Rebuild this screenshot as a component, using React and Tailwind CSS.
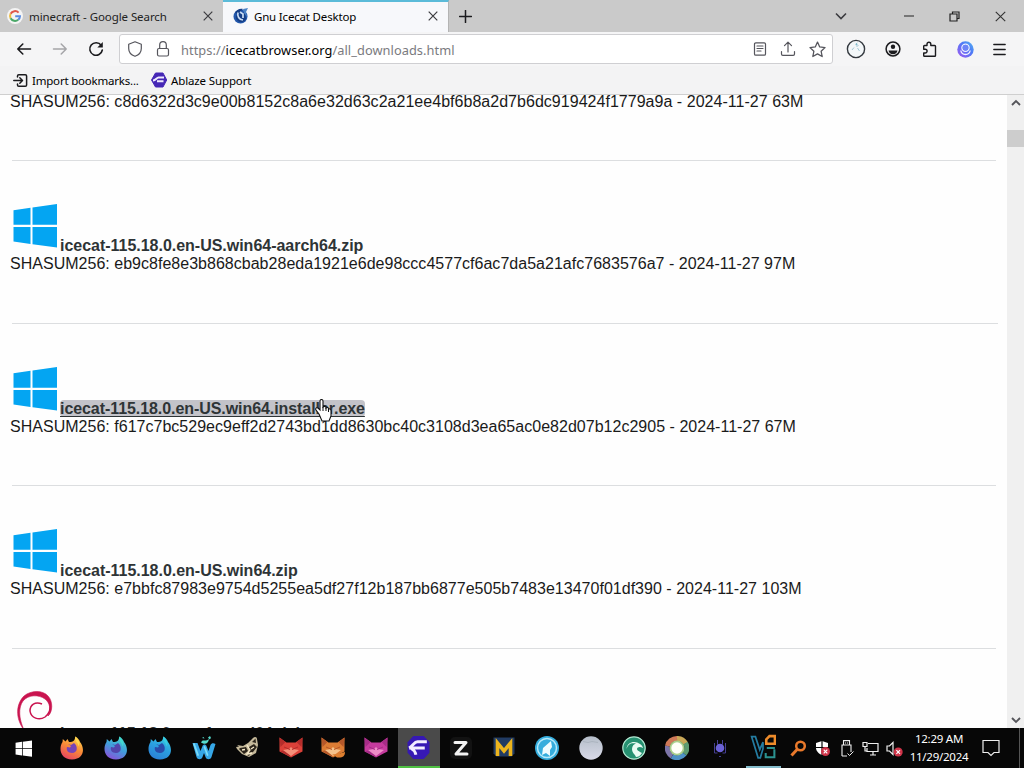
import React from "react";

const Svg = ({ size = 24, box = 24, className = "", children }) => (
  <svg width={size} height={size} viewBox={`0 0 ${box} ${box}`} fill="none" className={`shrink-0 ${className}`}>
    {children}
  </svg>
);

/* ---------- browser chrome icons ---------- */
const line = { stroke: "#1b1b1e", strokeWidth: 1.5, strokeLinecap: "round", strokeLinejoin: "round" };
const thin = { stroke: "#55555c", strokeWidth: 1.2, strokeLinecap: "round", strokeLinejoin: "round" };

const Google = () => (
  <Svg size={16} box={16}>
    <circle cx="8" cy="8" r="8" fill="#f4f4f4" />
    <path d="M11.6 4.6A5 5 0 0 0 3.6 5.8" stroke="#e0584a" strokeWidth="2" />
    <path d="M3.6 5.8a5 5 0 0 0 0 4.5" stroke="#edbd42" strokeWidth="2" />
    <path d="M3.6 10.3a5 5 0 0 0 7.6 1.5" stroke="#4ba868" strokeWidth="2" />
    <path d="M11.2 11.8A5 5 0 0 0 13 8.2H8.2" stroke="#5a8be0" strokeWidth="2" />
  </Svg>
);
const IceCat = () => (
  <Svg size={16} box={16}>
    <circle cx="7.500" cy="8.500" r="7" fill="#2257ab" />
    <path d="M2 5c1-3 5-5 8-4L7 4l5 1 1 6c-2 4-7 4-9 1C2 10 3 7 5 6z" fill="#153e86" />
    <path d="M5 4.500c-1 4 1 7 5 7.500M7 4l3 2v4" stroke="#c8dcf4" strokeWidth="1.700" />
    <path d="M10 1l5-1-2 4 1 5-3-4z" fill="#4c83c6" />
  </Svg>
);
const Close = ({ size = 10, color = "#3c3c40", width = 1.2 }) => (
  <Svg size={size} box={10}><path d="M.7.7l8.6 8.6M9.3.7L.7 9.3" stroke={color} strokeWidth={width} /></Svg>
);
const Plus = () => <Svg size={13} box={13}><path d="M6.5.5v12M.5 6.5h12" {...line} /></Svg>;
const Back = () => <Svg size={16} box={16}><path d="M14.500 8H1.800M6.800 3L1.800 8l5 5" {...line} strokeWidth="1.600" /></Svg>;
const Forward = () => <Svg size={16} box={16}><path d="M1.500 8h12.700M9.200 3l5 5-5 5" {...line} stroke="#a5a5a8" /></Svg>;
const Reload = () => (
  <Svg size={16} box={16}>
    <path d="M13.200 4.300A6.300 6.300 0 1 0 14.300 9" {...line} strokeWidth="1.600" />
    <path d="M14.800 1v5.500H9.300z" fill="#1b1b1e" />
  </Svg>
);
const Shield = () => (
  <Svg size={16} box={16}><path d="M8 .8l6.300 2.400v4.300c0 3.600-2.600 6.500-6.300 7.800C4.300 14 1.700 11.100 1.700 7.500V3.200z" {...thin} /></Svg>
);
const Lock = () => (
  <Svg size={16} box={16}>
    <rect x="2.500" y="7.500" width="11" height="7.500" rx="1.500" {...thin} />
    <path d="M4.700 7.500V4a3.300 3.300 0 0 1 6.600 0v3.500" {...thin} />
  </Svg>
);
const Reader = () => (
  <Svg size={14} box={14}><rect x="1.500" y=".8" width="11" height="12.400" rx="1.300" {...thin} /><path d="M4 4h6M4 6.500h6M4 9h4" {...thin} /></Svg>
);
const Share = () => (
  <Svg size={16} box={16}><path d="M8 11V1.500M4.500 4.700L8 1.200l3.500 3.500M1.500 10.500V13c0 .8.500 1.300 1.300 1.300h10.400c.8 0 1.300-.5 1.300-1.300v-2.500" {...thin} /></Svg>
);
const Star = () => (
  <Svg size={17} box={16}><path d="M8 1l2.100 4.600 5 .6-3.700 3.400 1 5L8 12.100l-4.400 2.500 1-5L.9 6.200l5-.6z" {...thin} /></Svg>
);
const Gauge = () => (
  <Svg size={20} box={20}>
    <circle cx="10" cy="10" r="8.600" fill="#f3f7f9" stroke="#33383e" strokeWidth="1.400" />
    <path d="M10 5l1.300-1.200M10.500 7.500l2-1M8 8.500L6 11M11.500 9l2 3" stroke="#8fbccd" strokeWidth=".8" />
    <circle cx="10.500" cy="5.500" r="1" fill="#7db9cb" />
  </Svg>
);
const Account = () => (
  <Svg size={16} box={16}>
    <circle cx="8" cy="8" r="6.900" {...line} />
    <circle cx="8" cy="5.800" r="2.200" fill="#1b1b1e" />
    <path d="M3.500 9.500h9c-.3 2.400-2 3.700-4.500 3.700S3.800 11.900 3.500 9.500z" fill="#1b1b1e" />
  </Svg>
);
const Puzzle = () => (
  <Svg size={17} box={17}>
    <path d="M6 4.500V3.200a1.900 1.900 0 0 1 3.800 0v1.300h3.900c.5 0 .8.300.8.800v9.200c0 .5-.3.800-.8.800H3.500c-.5 0-.8-.3-.8-.8v-2.500h1.500a1.900 1.900 0 0 0 0-3.800H2.700V5.300c0-.5.300-.8.800-.8z" {...line} strokeWidth="1.400" />
  </Svg>
);
const Avatar = () => (
  <Svg size={17} box={17}>
    <defs><linearGradient id="avatar" x1="0" y1="1" x2="1" y2="0"><stop stopColor="#a25af0" /><stop offset=".6" stopColor="#4d79f6" /><stop offset="1" stopColor="#55b8f2" /></linearGradient></defs>
    <circle cx="8.500" cy="8.500" r="8.200" fill="url(#avatar)" />
    <circle cx="8.500" cy="6.800" r="3.600" stroke="#f0f2ff" strokeWidth="1.300" />
    <path d="M3.800 9.500c1 5.300 8.400 5.300 9.400 0" stroke="#f4f4ff" strokeWidth="1.300" />
    <circle cx="8.500" cy="6.600" r="2.800" fill="#6d84f7" />
  </Svg>
);
const Menu = () => <Svg size={13} box={13}><path d="M.8 1.500h11.400M.8 6.500h11.400M.8 11.500h11.400" {...line} strokeWidth="1.300" /></Svg>;
const Import = () => (
  <Svg size={15} box={15}>
    <path d="M4.500 4V3c0-.8.500-1.300 1.300-1.300h6.500c.8 0 1.300.5 1.300 1.300v9c0 .8-.5 1.300-1.300 1.300H5.800c-.8 0-1.300-.5-1.300-1.300v-1" {...line} />
    <path d="M.8 7.500h8.500M6.800 4.800l2.700 2.700-2.700 2.700" {...line} />
  </Svg>
);
const Ablaze = () => (
  <Svg size={16} box={16}>
    <path d="M4.500 1h7.500l3.700 7-3.700 7H4.500L.5 8z" fill="#4527b5" stroke="#4527b5" strokeLinejoin="round" />
    <path d="M13 5.500H7.500C5.500 5.500 5 8.500 2 8.500M12.500 9.300H6" stroke="#efeaff" strokeWidth="1.900" />
  </Svg>
);
const Chevron = ({ className = "" }) => (
  <Svg size={12} box={12} className={className}><path d="M1 3.500l5 5 5-5" stroke="#3c3c40" strokeWidth="1.600" /></Svg>
);
const ScrollArrow = ({ className = "" }) => (
  <Svg size={10} box={10} className={className}><path d="M1 3l4 4 4-4" stroke="#55555a" strokeWidth="1.900" /></Svg>
);

/* ---------- page artwork ---------- */
const WinLogo = ({ size = 45, color = "#04a5f2" }) => (
  <Svg size={size} box={45}>
    <path d="M1.500 7.300l17-2.500v17h-17zM20.500 4.400L45 1v20.800H20.500zM1.500 24h17v17l-17-2.500zM20.500 24H45v20.600l-24.500-3.300z" fill={color} />
  </Svg>
);
const Debian = () => (
  <Svg size={45} box={45}>
    <path d="M28 15c-7-3-12 1-12 7 1 7 9 10 15 6 4-3 6-8 5-14" stroke="#c9144f" strokeWidth="1.500" />
    <path d="M10 41C1 29 2 15 10 7c7-6 19-6 24 0 5 5 5 16 0 20 3-7 2-13-3-17-7-5-17-4-22 2-5 7-4 18 1 29z" fill="#c9144f" stroke="#c9144f" strokeWidth=".6" />
  </Svg>
);

/* ---------- taskbar icons ---------- */
const Fox = ({ id, a, b, c, core }) => (
  <Svg>
    <defs><linearGradient id={id} x1=".8" y1="0" x2=".3" y2="1"><stop stopColor={a} /><stop offset=".5" stopColor={b} /><stop offset="1" stopColor={c} /></linearGradient></defs>
    <path d="M15.500.5c3 2 4 4 4.500 5.500 5 6 4.500 17.500-8 17.500C4 23.500.5 18 .5 13c0-3 .7-5 2-7l.3-3 2.700 2.600L7.500 3 9 6c2 0 4-.5 5-1.500.8-1 1-2.500 1.500-4z" fill={`url(#${id})`} />
    <path d="M8 8l3 1 3-2c4 3 4 10-2 10-4 0-6-3-5-6l3 .5 1-1.500z" fill={core} />
    <path d="M15.500.5c-2 4 3 6 3 10 1-2 1-3 .5-5-1-2-2-3-3.500-5z" fill={a} />
  </Svg>
);
const Waterfox = () => (
  <Svg>
    <path d="M.5 7h5l3 8 2-5c1-2 3-2 4 0l2 5 2-6c1-2 3-2 5-1l-4 13c-1 3-5 3-6 0l-1.500-4-1.500 4c-1 3-5 3-6 0z" fill="#36a7e7" />
    <path d="M2 8l4 11M12.500 11l3 8" stroke="#7bdcf7" strokeWidth="1.800" strokeLinecap="round" />
    <path d="M9 6.500c2-4 4 0 8-3.500-.5 4-3 5.500-6 4.500zM16 1.500l2-1.500 1 2-1.500 1.500zM10 2l1.500-1 1 1.500z" fill="#55dccd" />
  </Svg>
);
const Raccoon = () => (
  <Svg>
    <path d="M1 9l6 1 5-3 5-5c2-2 4-1 4 1l1 6-2 8-7 4-7-3-5-5-1-2 3-.5z" fill="#c5b99a" />
    <path d="M4 12l6-1 2 4-4 3-5-5zM13 11l5-3 3 3-4 5-4 1zM16 6l3.500-3.500L20 7zM11 19l3-1-1 2z" fill="#2b241a" />
    <path d="M6 14l3-.5M15 13l3-2M11 9l3 5-3 4 5-1" stroke="#f7ebca" strokeWidth="1.300" />
  </Svg>
);
const FoxHead = ({ main, dark, light, tail }) => (
  <Svg>
    <path d="M.5 1.500l7 5h9l7-5v14l-4 2-7.500 4-7.500-4-4-2z" fill={main} />
    <path d="M.5 1.500l6 4.500-5 5zM23.500 1.500l-6 4.500 5 5zM1 15l6-1 5 7-8-4z" fill={dark} />
    <path d="M4 14l6-1 2-2 2 2 6 1-4 3-4 3-4-3z" fill={light} />
    <path d="M5 11l6 2.500M19 11l-6 2.500" stroke={dark} strokeWidth="1" />
    {tail && <path d="M11 18c5 1 8-1 13-2 0 4-2 6-8 5.500z" fill={tail} />}
  </Svg>
);
const FloorpApp = () => (
  <Svg size={25}>
    <path d="M7 1h10l5.500 6v10L17 23H7L1.500 17V7z" fill="#3618b4" />
    <path d="M20 6.500H11C8 6.500 7 10 3 12.500M3 12.500h15M5 13c2 1 4 3 4.500 6" stroke="#f2edff" strokeWidth="2.800" />
  </Svg>
);
const Zen = () => (
  <Svg>
    <rect x="1" y="1" width="22" height="22" rx="5" fill="#121212" />
    <path d="M6 6.500h11L7 18h11" stroke="#f4f4f4" strokeWidth="3" strokeLinejoin="round" strokeLinecap="round" />
  </Svg>
);
const Mull = () => (
  <Svg>
    <path d="M1.500 1.500h21v16l-3 3h-15l-3-3z" fill="#213b63" />
    <path d="M5.500 20V7l6.500 8 6.500-8v13" stroke="#edb51d" strokeWidth="3.600" />
  </Svg>
);
const Wolf = () => (
  <Svg>
    <circle cx="12" cy="12" r="12" fill="#35addd" /><circle cx="12" cy="12" r="9.500" stroke="#b5e9fa" strokeWidth="1.500" />
    <path d="M7 19l1-7 8-7 1 6-2 3v6l-4-3z" fill="#eefcff" />
  </Svg>
);
const Orb = () => (
  <Svg>
    <defs><linearGradient id="orb" x1="0" y1="0" x2="0" y2="1"><stop stopColor="#b5bec9" /><stop offset="1" stopColor="#d9dae8" /></linearGradient></defs>
    <circle cx="12" cy="12" r="11.700" fill="url(#orb)" /><path d="M4 5.500l5 1 4-1 6 1" stroke="#a3adb8" strokeWidth=".7" />
  </Svg>
);
const Wave = () => (
  <Svg>
    <circle cx="12" cy="12" r="11.200" fill="#269171" stroke="#b4e8d2" strokeWidth="1.200" />
    <path d="M4.500 13C5 6 13 4 18 8c2 1.500 3 3 3 4-3-2-6-1-6 1 0 1.500 2 2 3 3l2 1c-2 3-4 4-6 4-1-3-4-4-4-8 0-3 2-5 4-5.500C9 6.500 6 8 4.500 13z" fill="#e9fbf3" />
  </Svg>
);
const Rainbow = () => (
  <Svg>
    <path d="M12 2.500a9.500 9.500 0 0 1 8.700 5" stroke="#c9a858" strokeWidth="5" /><path d="M20.500 7a9.700 9.700 0 0 1-1 11" stroke="#5c9b72" strokeWidth="5" />
    <path d="M19.500 18A9.700 9.700 0 0 1 7 20.300" stroke="#4e91c5" strokeWidth="5" /><path d="M7 20.300A9.700 9.700 0 0 1 2.500 10" stroke="#7d75a8" strokeWidth="5" />
    <path d="M2.500 10A9.700 9.700 0 0 1 12 2.500" stroke="#cf7958" strokeWidth="5" />
    <circle cx="12" cy="12" r="7.500" fill="#a9cf8c" /><circle cx="12" cy="12" r="5.700" fill="#fffff8" />
  </Svg>
);
const Robot = () => (
  <Svg>
    <circle cx="12" cy="12" r="4.300" fill="#6b62d8" />
    <path d="M6.500 7v10h3M17.500 7v10h-3M9.500 4v5M14.500 4v5M11 20.500h2" stroke="#453f92" />
  </Svg>
);
const Viva = () => (
  <Svg size={26}>
    <path d="M1.500 2.500h3.500l4 12 3-7v6l-2.500 8.500h-2z" stroke="#247ca1" strokeWidth="1.600" />
    <path d="M23 13h-7.500M22.500 14v7.500h-8v-4" stroke="#2b9290" strokeWidth="1.900" />
    <path d="M15 9V5l3-3h5v7z" stroke="#ed8b2a" strokeWidth="2.400" />
  </Svg>
);
const Magnifier = () => <Svg size={17} box={17}><circle cx="10.500" cy="6" r="4.300" stroke="#e9792b" strokeWidth="2.500" /><path d="M7.500 9L1.500 15.500" stroke="#e9792b" strokeWidth="3" /></Svg>;
const Badge = ({ x, y }) => <g><circle cx={x} cy={y} r="4.500" fill="#cf3449" /><path d={`M${x - 1.800} ${y - 1.800}l3.600 3.600m0-3.600l-3.600 3.600`} stroke="white" strokeWidth="1.200" /></g>;
const Defender = () => <Svg size={17} box={17}><path d="M8 1l6 2v5c0 3-3 6-6 7-3-1-6-4-6-7V3z" fill="white" /><path d="M8 1v14M1 7.500h13" stroke="#090909" strokeWidth="1.200" /><Badge x={11.5} y={11.5} /></Svg>;
const Usb = () => <Svg size={17} box={17}><path d="M5.500 5V.6h6V5M4 16V5h9v7M4 16h5M7.500 2.500v1M9.500 2.500v1" stroke="#eee" strokeWidth="1.100" /><path d="M9.500 13.500l2 2 4-4" stroke="#eee" /></Svg>;
const Network = () => <Svg size={17} box={17}><path d="M6 3.500h10v8H5V8M8 15h6M11 11.500V15M1 2.500h4v4H1zM3 6.500V11h2" stroke="#eee" strokeWidth="1.200" /></Svg>;
const Sound = () => <Svg size={17} box={17}><path d="M1 6h2.500L7 2.500v12L3.500 11H1z" stroke="#eee" strokeWidth="1.200" /><Badge x={12.2} y={12} /></Svg>;
const Notify = () => <Svg size={18} box={18}><path d="M1 1.500h16v12h-5l-3 3-3-3H1z" stroke="#eee" strokeWidth="1.200" /></Svg>;

const apps = [
  <Fox id="fx1" a="#ffd64d" b="#f98b37" c="#e74363" core="#7744b7" />,
  <Fox id="fx2" a="#43d9ce" b="#419edb" c="#8952d9" core="#5345ad" />,
  <Fox id="fx3" a="#36cde2" b="#2b9fe0" c="#2b7fd6" core="#294caa" />,
  <Waterfox />,
  <Raccoon />,
  <FoxHead main="#dc4139" dark="#b42d2b" light="#f5917a" />,
  <FoxHead main="#dc7c34" dark="#b5582a" light="#f5c28c" tail="#dd7f30" />,
  <FoxHead main="#c63b9e" dark="#a62c87" light="#ef8ec8" />,
  <FloorpApp />, <Zen />, <Mull />, <Wolf />, <Orb />, <Wave />, <Rainbow />, <Robot />, <Viva />,
];

const cellClass = (i) =>
  i === 8
    ? "border-b-2 border-[#4fc043] bg-[#4a4a4a]"
    : i === 16
      ? "border-b-2 border-[#84bccb] mx-1"
      : "";

const downloads = [
  { name: "icecat-115.18.0.en-US.win64-aarch64.zip", sum: "SHASUM256: eb9c8fe8e3b868cbab28eda1921e6de98ccc4577cf6ac7da5a21afc7683576a7 - 2024-11-27 97M", rule: "w-[984px]" },
  { name: "icecat-115.18.0.en-US.win64.installer.exe", sum: "SHASUM256: f617c7bc529ec9eff2d2743bd1dd8630bc40c3108d3ea65ac0e82d07b12c2905 - 2024-11-27 67M", rule: "w-[986px]", hover: true },
  { name: "icecat-115.18.0.en-US.win64.zip", sum: "SHASUM256: e7bbfc87983e9754d5255ea5df27f12b187bb6877e505b7483e13470f01df390 - 2024-11-27 103M", rule: "w-[984px]" },
];

const HandCursor = () => (
  <svg width="18" height="24" viewBox="0 0 18 24" className="absolute left-[254px] -top-px">
    <path d="M5 15L2 11c-1-2 1-3 2-2l2 2V2c0-2 3-2 3 0v6c1-1 3-1 3 1 1-1 2.500-.5 2.500 1 1.500-.5 2.500.3 2.500 2v5l-2 5H8z" fill="white" stroke="#111" strokeWidth="1.100" />
    <path d="M9 8v4M12 9v3M14.500 10v3" stroke="#111" />
  </svg>
);

export default function App() {
  return (
    <div className="flex h-[768px] w-[1024px] flex-col overflow-hidden bg-[#fefefe] font-['Noto_Sans',sans-serif] text-black">
      {/* tabs */}
      <header className="flex h-8 shrink-0 bg-[#cacaca] text-[11.5px]">
        <div className="flex w-[223px] items-center pl-[7px] pr-[10px]">
          <Google />
          <span className="ml-[6px] flex-1 whitespace-nowrap pt-px tracking-[-0.08px] text-[#222]">minecraft - Google Search</span>
          <Close />
        </div>
        <div className="flex w-[226px] items-center border-t-2 border-r border-t-[#5bbbd9] border-r-[#b4b4b4] bg-[#f7f8fb] pl-[10px] pr-[10px] pb-[2px]">
          <IceCat />
          <span className="ml-[5px] flex-1 whitespace-nowrap pt-px tracking-[-0.18px]">Gnu Icecat Desktop</span>
          <Close />
        </div>
        <div className="flex flex-1 items-center pl-[10px]"><Plus /></div>
        <div className="flex items-center pr-[18px]">
          <Chevron className="mr-[57px]" />
          <svg width="10" height="2" className="mr-[35px]"><path d="M0 1h10" stroke="#222" /></svg>
          <Svg size={11} box={11} className="mr-[35px]"><path d="M1 3h7v7H1zM3.500 3V1H10v6.500H8" stroke="#222" strokeWidth="1.200" /></Svg>
          <Close size={11} color="#333" width={1} />
        </div>
      </header>

      {/* navigation */}
      <nav className="flex h-[34px] shrink-0 items-center bg-[#f5f5f6] pl-4 pr-[18px]">
        <div className="flex w-[103px] items-center gap-5"><Back /><Forward /><Reload /></div>
        <div className="flex h-[30px] w-[714px] items-center rounded-[3px] border border-[#cfcfd2] bg-white pl-[7px] pr-[6px]">
          <div className="flex items-center gap-3"><Shield /><Lock /></div>
          <span className="ml-[10px] flex-1 whitespace-nowrap pt-[3px] text-[12.8px] tracking-[0.06px] text-[#7a7a7e]">https://<span className="text-black">icecatbrowser.org</span>/all_downloads.html</span>
          <div className="flex items-center gap-[13px]"><Reader /><Share /><Star /></div>
        </div>
        <div className="ml-[13px] flex flex-1 items-center justify-between"><Gauge /><Account /><Puzzle /><Avatar /><Menu /></div>
      </nav>

      {/* bookmarks */}
      <div className="flex h-[29px] shrink-0 items-center border-b border-[#cfcfcf] bg-[#f3f3f4] pl-[13px] text-[11.5px]">
        <Import />
        <span className="ml-1 w-[119px] whitespace-nowrap pt-px tracking-[-0.2px]">Import bookmarks...</span>
        <Ablaze />
        <span className="ml-1 whitespace-nowrap pt-px tracking-[-0.13px]">Ablaze Support</span>
      </div>

      {/* page */}
      <div className="flex min-h-0 flex-1">
        <main className="flex-1 overflow-hidden pl-[10px] font-['Liberation_Sans',Arial,sans-serif] text-[16px] leading-[18px] tracking-[0.02px] text-[#1a1a1a]">
          <p className="mt-[-2px] h-[67px] whitespace-nowrap tracking-[0.03px]">SHASUM256: c8d6322d3c9e00b8152c8a6e32d63c2a21ee4bf6b8a2d7b6dc919424f1779a9a - 2024-11-27 63M</p>
          {downloads.map((d) => (
            <section key={d.name} className="h-[162.5px]">
              <div className={`ml-[2px] h-px bg-[#dcdee0] ${d.rule}`} />
              <div className="flex h-[94px] items-end pl-[2px]">
                <div className="mb-[7px]"><WinLogo /></div>
                <div className="relative ml-[3px] whitespace-nowrap font-bold tracking-[-0.02px] text-[#2e3436]">
                  <span className={d.hover ? "mb-px block h-[17px] rounded-[4px] bg-[#c3c3c9] leading-[17px] tracking-[-0.07px] underline underline-offset-2" : "block"}>{d.name}</span>
                  {d.hover && <HandCursor />}
                </div>
              </div>
              <p className="whitespace-nowrap">{d.sum}</p>
            </section>
          ))}
          <div className="ml-[2px] h-px w-[984px] bg-[#dcdee0]" />
          <div className="flex h-[94px] items-end pl-[4px]">
            <div className="mb-[9px]"><Debian /></div>
            <span className="ml-px whitespace-nowrap font-bold tracking-[-0.1px] text-[#2e3436]">icecat-115.18.0-gnu1_amd64.deb</span>
          </div>
        </main>
        <aside className="flex w-[17px] flex-col items-center bg-[#f0f0f0]">
          <ScrollArrow className="mt-[3px] rotate-180" />
          <div className="mt-[22px] h-[17px] w-full bg-[#cdcdcd]" />
          <div className="flex-1" />
          <ScrollArrow className="mb-[3px]" />
        </aside>
      </div>

      {/* taskbar */}
      <footer className="flex h-10 shrink-0 items-center bg-[#070707] text-white">
        <div className="flex w-[49.5px] justify-center pr-[2px]"><WinLogo size={17} color="#fff" /></div>
        <div className="grid h-full w-[735.5px] grid-cols-[repeat(5,44px)_42px_43px_43px_42px_repeat(8,43.2px)]">
          {apps.map((icon, i) => (
            <div key={i} className={`flex items-center justify-center ${cellClass(i)}`}>{icon}</div>
          ))}
        </div>
        <div className="ml-[5px] flex gap-[7px]"><Magnifier /><Defender /><Usb /><Network /><Sound /></div>
        <div className="flex w-[72px] flex-col items-center whitespace-nowrap text-[11.5px] leading-[18px] tracking-[-0.25px]">
          <span>12:29 AM</span><span>11/29/2024</span>
        </div>
        <div className="ml-[7px]"><Notify /></div>
        <div className="ml-auto mr-[4px] h-full w-px bg-[#555]" />
      </footer>
    </div>
  );
}
